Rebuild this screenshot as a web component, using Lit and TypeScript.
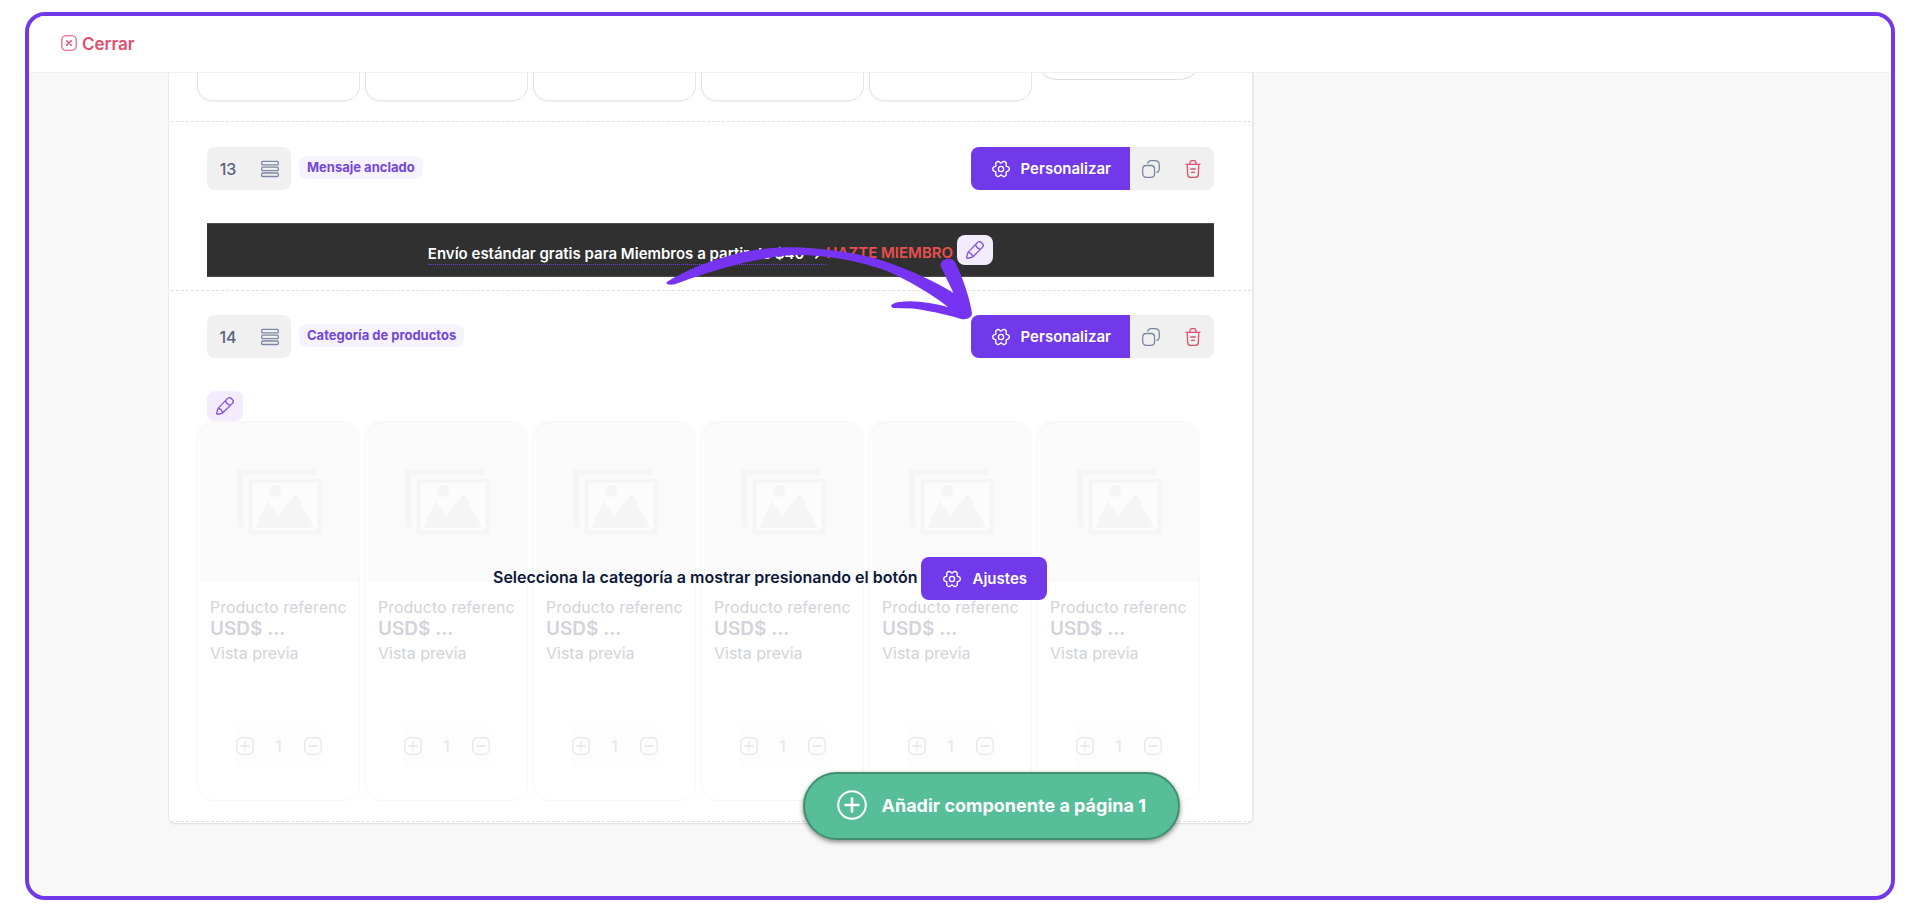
import { LitElement, html, css, svg } from "lit";
import { customElement, property } from "lit/decorators.js";

const shared = css`
  *, *::before, *::after { box-sizing: border-box; }
  button, input { font: inherit; color: inherit; margin: 0; padding: 0; border: 0; background: none; }
  button { cursor: pointer; display: inline-flex; align-items: center; justify-content: center; }
  svg { display: block; fill: none; stroke: currentColor; flex: none; }
`;

// Six-lobed outline around the gear's hub.
const gearOutline = "M" + Array.from({ length: 72 }, (_, i) => {
  const angle = (i * Math.PI) / 36;
  const radius = 7.3 + 1.15 * Math.cos(6 * angle) - 0.2 * Math.cos(12 * angle);
  return `${(9 + radius * Math.cos(angle)).toFixed(2)} ${(9 + radius * Math.sin(angle)).toFixed(2)}`;
}).join(" L") + " Z";

const gearIcon = html`<svg width="18" height="18" viewBox="0 0 18 18" stroke-width="1.4" stroke-linejoin="round" aria-hidden="true">
  <path d=${gearOutline}/><circle cx="9" cy="9" r="2.6"/></svg>`;

const listIcon = html`<svg width="18" height="18" viewBox="0 0 18 18" stroke-width="1.3" aria-hidden="true">
  <rect x=".7" y="1.4" width="16.6" height="3.500" rx="1"/><rect x=".7" y="7.200" width="16.6" height="3.500" rx="1"/><rect x=".7" y="13" width="16.6" height="3.500" rx="1"/></svg>`;

const copyIcon = html`<svg width="18" height="18" viewBox="0 0 18 18" stroke-width="1.3" stroke-linecap="round" aria-hidden="true">
  <rect x=".7" y="5.5" width="11.8" height="11.8" rx="3.4"/>
  <path d="M5.8 3.2 C6.2 1.5 7.3.7 9.2.7 H13 C16 .7 17.3 2 17.3 5 V8.800 C17.3 10.700 16.500 12 14.800 12.300"/></svg>`;

const trashIcon = html`<svg width="16" height="18" viewBox="0 0 16 18" stroke-width="1.3" stroke-linecap="round" aria-hidden="true">
  <path d="M1 4.300 H15 M4.600 4 L5.400 1.700 C5.600 1 6 .7 6.700 .7 H9.300 C10 .7 10.400 1 10.600 1.700 L11.400 4 M2.200 4.500 L2.700 14.600 C2.800 16.500 3.600 17.300 5.400 17.300 H10.600 C12.400 17.300 13.200 16.500 13.300 14.600 L13.800 4.500 M5.700 9 H10.300 M6.500 12.400 H9.500"/></svg>`;

const pencilIcon = html`<svg width="18" height="18" viewBox="0 0 18 18" stroke-width="1.3" stroke-linejoin="round" stroke-linecap="round" aria-hidden="true">
  <path d="M11.400 1.600 C12.600.4 14.200.5 15.300 1.500 L16.500 2.700 C17.500 3.800 17.500 5.300 16.400 6.400 L7.200 15.500 C6.600 16 6 16.300 5.300 16.500 L1.500 17.300 C.9 17.400.6 17.100.7 16.500 L1.600 12.700 C1.800 12 2 11.400 2.500 10.900 Z M9.600 3.500 C10.200 5.900 12.100 7.800 14.500 8.300 M2.300 11.200 C4.400 11.800 6.100 13.500 6.900 15.700"/></svg>`;

const closeIcon = html`<svg width="16" height="16" viewBox="0 0 16 16" stroke-width="1.100" stroke-linecap="round" aria-hidden="true">
  <rect x=".8" y=".8" width="14.400" height="14.400" rx="4"/><path stroke-width="1.500" d="M5.700 5.700 L10.300 10.300 M10.300 5.700 L5.700 10.300"/></svg>`;

const boxed = (plus: boolean) => html`<svg width="18" height="18" viewBox="0 0 18 18" stroke-width="1.300" stroke-linecap="round" aria-hidden="true">
  <rect x=".7" y=".7" width="16.600" height="16.600" rx="5"/><path d="M4.800 9 H13.200"/>${plus ? svg`<path d="M9 4.800 V13.200"/>` : ""}</svg>`;

const pictureIcon = html`<svg width="86" height="66" viewBox="0 0 86 66" aria-hidden="true">
  <path d="M7 58 C4 58 3 56 3 54 V3 H77 V7" stroke-width="5"/>
  <rect x="13.500" y="12" width="69" height="51.500" fill="#fcfcfc" stroke-width="4"/>
  <circle cx="38" cy="22" r="6" fill="currentColor" stroke="none"/>
  <path d="M18 59 L31 32 L41 47 L59 25 L77 59 Z" fill="currentColor" stroke="none"/></svg>`;

@customElement("block-toolbar")
class BlockToolbar extends LitElement {
  @property({ type: Number }) position = 0;
  @property() label = "";

  static styles = [shared, css`
    :host { display: flex; align-items: center; gap: 8px; height: 43px; }
    .group { display: flex; height: 43px; border-radius: 8px; overflow: hidden; background: #f0f0f0; color: #7d86a0; }
    .cell { width: 42px; height: 43px; display: inline-flex; align-items: center; justify-content: center; }
    .number { color: #5a627c; font-weight: 500; font-size: 16px; }
    .tag { padding: 0 8px; border-radius: 8px; background: #f6f2fe; color: #7446d8; font-size: 13px; line-height: 23px; font-weight: 700; margin-bottom: 2px; }
    .actions { margin-left: auto; }
    .primary { background: #7239ea; color: #fff; gap: 11px; padding: 0 19px 0 21px; font-size: 15px; font-weight: 600; }
    .danger { color: #e2506f; }
  `];

  render() {
    return html`
      <div class="group">
        <span class="cell number">${this.position}</span>
        <button class="cell" aria-label="Mover">${listIcon}</button>
      </div>
      <span class="tag">${this.label}</span>
      <div class="group actions">
        <button class="primary">${gearIcon}<span>Personalizar</span></button>
        <button class="cell" aria-label="Duplicar">${copyIcon}</button>
        <button class="cell danger" aria-label="Eliminar">${trashIcon}</button>
      </div>`;
  }
}

@customElement("product-card")
class ProductCard extends LitElement {
  static styles = [shared, css`
    :host { display: flex; flex-direction: column; min-width: 0; height: 380px; border: 1px solid #f7f7f8; border-radius: 16px; color: #d3d3d9; overflow: hidden; padding: 0 0 33px; }
    .picture { height: 160px; margin: 0 0 0 2px; background: #fafafa; color: #f5f5f5; display: flex; align-items: center; justify-content: center; }
    .info { padding: 15px 13px 0 12px; font-size: 16px; line-height: 20px; white-space: nowrap; }
    .line { overflow: hidden; }
    .price { font-size: 19px; font-weight: 600; line-height: 24px; }
    .note { line-height: 24px; }
    .quantity { display: flex; align-items: center; align-self: center; justify-content: space-between; width: 90px; height: 43px; padding: 0 2px; margin-top: auto; border-radius: 8px; background: #fdfdfd; color: #e6e6ea; }
    .quantity input { width: 30px; text-align: center; font-size: 16px; outline: 0; }
  `];

  render() {
    return html`
      <div class="picture">${pictureIcon}</div>
      <div class="info">
        <div class="line">Producto referencial</div>
        <div class="price">USD$ ...</div>
        <div class="note">Vista previa</div>
      </div>
      <div class="quantity">
        <button aria-label="Sumar">${boxed(true)}</button>
        <input aria-label="Cantidad" value="1" />
        <button aria-label="Restar">${boxed(false)}</button>
      </div>`;
  }
}

@customElement("app-root")
class AppRoot extends LitElement {
  static styles = [shared, css`
    :host { display: block; min-height: 100vh; padding: 12px 25px; background: #fff; font-family: Inter, "Liberation Sans", sans-serif; box-sizing: border-box; }
    .frame { min-height: calc(100vh - 24px); border: 4px solid #7239ea; border-radius: 20px; background: #f8f8f8; overflow: hidden; }
    header { height: 57px; background: #fff; border-bottom: 1px solid #f0f0f1; display: flex; align-items: center; padding: 0 32px; }
    .close { gap: 5px; color: #e2506f; font-size: 17px; font-weight: 600; line-height: 24px; }
    .close svg { margin-bottom: 2px; }
    .workspace { display: grid; grid-template-columns: minmax(0, 139fr) minmax(0, 1086fr) minmax(0, 637fr); }
    .panel { grid-column: 2; position: relative; background: #fff; border: solid #e9e9ee; border-width: 0 2px 0 1px; border-radius: 0 0 6px 6px; box-shadow: 0 3px 2px -2px #dcdce2; margin-bottom: 72px; padding: 0 1px 1px 2px; }
    section { border-bottom: 1px dashed #dedee3; padding: 25px 37px 0 36px; }
    .previous { padding: 0 51px 19px 26px; }
    .cards { display: grid; grid-template-columns: repeat(6, minmax(0, 1fr)); gap: 5px; }
    .clip { height: 29px; overflow: hidden; }
    .edge { height: 60px; margin-top: -31px; border: 1px solid #e4e4ea; border-bottom: 2px solid #ececf1; border-radius: 16px; }
    .edge.short { margin-top: -53px; border-bottom: 1px solid #dedee6; border-radius: 20px; }
    .banner { margin: 33px 0 13px; height: 54px; background: #303030; border: solid #4d4d4d; border-width: 1px 0; display: flex; align-items: flex-start; justify-content: center; padding-top: 11px; font-size: 15px; line-height: 20px; font-weight: 600; color: #fff; white-space: nowrap; }
    .message { margin-top: 9px; border-bottom: 1px dotted #7239ea; }
    .join { margin-top: 8px; color: #e9504e; text-decoration: none; }
    .edit { width: 36px; height: 30px; border-radius: 8px; background: #f3ebfe; color: #8150df; flex: none; }
    .banner .edit { margin-left: 4px; }
    .anchor { position: relative; }
    .arrow { position: absolute; right: 234px; top: -75px; fill: #7733f2; stroke: none; pointer-events: none; }
    .category { padding-top: 24px; padding-bottom: 20px; }
    .category .edit { margin-top: 33px; }
    .products { position: relative; margin: 0 14px 0 -10px; }
    .hint { position: absolute; right: 153px; top: 136px; display: flex; align-items: center; gap: 4px; white-space: nowrap; color: #0d1838; font-size: 16px; font-weight: 600; }
    .hint span { margin-bottom: 4px; }
    .settings { height: 43px; border-radius: 8px; background: #7239ea; color: #fff; gap: 11px; padding: 0 20px 0 22px; font-size: 15px; }
    .hint .settings span { margin: 0; }
    .add { position: absolute; right: 72px; bottom: -17px; height: 68px; border: 2px solid #42906f; border-radius: 34px; background: #56be98; color: #fff; gap: 14px; padding: 0 32px 2px; font-size: 18px; font-weight: 700; box-shadow: 0 2px 5px #0007; white-space: nowrap; }
  `];

  render() {
    return html`
      <div class="frame">
        <header><button class="close">${closeIcon}<span>Cerrar</span></button></header>
        <main class="workspace">
          <div class="panel">
            <section class="previous">
              <div class="cards clip">
                ${[0, 1, 2, 3, 4].map(() => html`<div class="edge"></div>`)}
                <div class="edge short"></div>
              </div>
            </section>
            <section>
              <block-toolbar .position=${13} label="Mensaje anclado"></block-toolbar>
              <div class="banner">
                <span class="message">Envío estándar gratis para Miembros a partir de $40 →&nbsp;</span>
                <a class="join" href="#">HAZTE MIEMBRO</a>
                <button class="edit" aria-label="Editar mensaje">${pencilIcon}</button>
              </div>
            </section>
            <section class="category">
              <div class="anchor">
                <block-toolbar .position=${14} label="Categoría de productos"></block-toolbar>
                <svg class="arrow" width="320" height="90" viewBox="660 240 320 90" aria-hidden="true">
                  <path d="M667.500 281.500 C688 269 714 259 743 252 C768 247 794 246 820 249 C843 251 866 255 887 262 C912 271 934 281 953.500 293 L941 267 C938 259 952 256 955 262 C963 278 969 296 972 313 C972 317 968 320 961 319 C951 316 937 312 913 308.500 L893 308 C889 306 892 303 899 302 C916 300 932 303 948 307 C929 292 909 281 887 271 C855 259 820 254 790 255 C752 259 715 269 677 283.500 C670 286 664 284 667.500 281.500 Z"/>
                </svg>
              </div>
              <button class="edit" aria-label="Editar categoría">${pencilIcon}</button>
              <div class="products">
                <div class="cards">${[0, 1, 2, 3, 4, 5].map(() => html`<product-card></product-card>`)}</div>
                <div class="hint">
                  <span>Selecciona la categoría a mostrar presionando el botón</span>
                  <button class="settings">${gearIcon}<span>Ajustes</span></button>
                </div>
              </div>
            </section>
            <button class="add">
              <svg width="30" height="30" viewBox="0 0 30 30" stroke-width="2" stroke-linecap="round" aria-hidden="true"><circle cx="15" cy="15" r="13.800"/><path stroke-width="2.600" d="M15 8.500 V21.500 M8.500 15 H21.500"/></svg>
              <span>Añadir componente a página 1</span>
            </button>
          </div>
        </main>
      </div>`;
  }
}
